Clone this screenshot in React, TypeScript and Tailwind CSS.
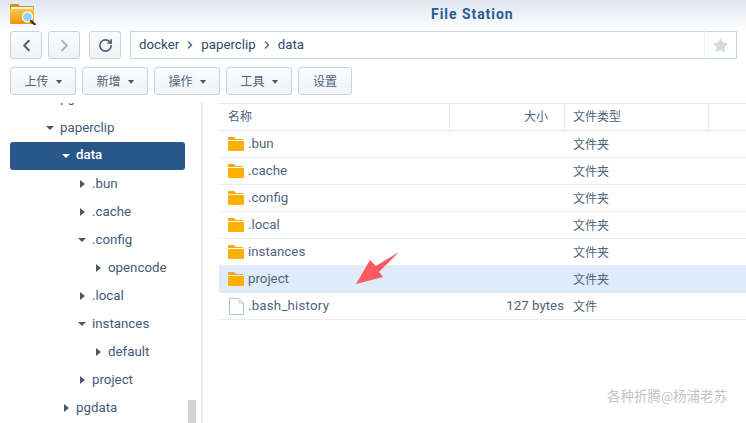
import { ChevronLeft, ChevronRight, RotateCw, Star } from 'lucide-react'

const FONT = "font-['Roboto','Noto_Sans_CJK_SC',sans-serif]"

const treeRows = [
  { label: 'pgadmin', depth: 2 },
  { label: 'paperclip', depth: 2, open: true },
  { label: 'data', depth: 3, open: true, selected: true },
  { label: '.bun', depth: 4 },
  { label: '.cache', depth: 4 },
  { label: '.config', depth: 4, open: true },
  { label: 'opencode', depth: 5 },
  { label: '.local', depth: 4 },
  { label: 'instances', depth: 4, open: true },
  { label: 'default', depth: 5 },
  { label: 'project', depth: 4 },
  { label: 'pgdata', depth: 3 },
]

const depthPad: Record<number, string> = {
  2: 'pl-[36px]',
  3: 'pl-[52px]',
  4: 'pl-[68px]',
  5: 'pl-[84px]',
}

const files = [
  { name: '.bun', type: '文件夹' },
  { name: '.cache', type: '文件夹' },
  { name: '.config', type: '文件夹' },
  { name: '.local', type: '文件夹' },
  { name: 'instances', type: '文件夹' },
  { name: 'project', type: '文件夹', hover: true },
  { name: '.bash_history', type: '文件', size: '127 bytes', file: true },
]

function FolderIcon() {
  return (
    <svg width="16" height="14" viewBox="0 0 16 14" className="shrink-0">
      <path d="M0 1 Q0 0 1 0 H6 L8 2 H15 V3 H0 Z" fill="#f5a81c" />
      <path d="M0 4 H16 V13 Q16 14 15 14 H1 Q0 14 0 13 Z" fill="#ffb000" />
    </svg>
  )
}

function FileIcon() {
  return (
    <svg width="15" height="17" viewBox="0 0 15 17" className="shrink-0">
      <path d="M.5.5 H10 L14.5 5 V16.5 H.5 Z" fill="#fff" stroke="#b4c0c8" />
      <path d="M10 .5 V5 H14.5" fill="#eef1f4" stroke="#c8d0d6" />
    </svg>
  )
}

function AppIcon() {
  return (
    <svg width="26" height="21" viewBox="0 0 26 21" className="shrink-0">
      <defs>
        <linearGradient id="fold" x1="0" y1="0" x2="0" y2="1">
          <stop offset="0" stopColor="#fcc64a" />
          <stop offset="1" stopColor="#ec9410" />
        </linearGradient>
      </defs>
      <path d="M0 1 Q0 0 1 0 H8 L10 2 H23 Q24 2 24 3 V6 H0 Z" fill="#d98f1c" />
      <rect x="1" y="3" width="22" height="2" fill="#f5efe0" />
      <path d="M0 5 H24 V19 Q24 20 23 20 H1 Q0 20 0 19 Z" fill="url(#fold)" />
      <circle cx="17.5" cy="13" r="5" fill="#8fd3f4" stroke="#f5f5f5" strokeWidth="1.4" />
      <path d="M21 17 L25 20.5" stroke="#333" strokeWidth="2.2" strokeLinecap="round" />
    </svg>
  )
}

function Caret() {
  return <span className="ml-[7px] h-0 w-0 border-x-[3.5px] border-t-[4px] border-x-transparent border-t-[#4a5a6a]" />
}

function ToolButton({ label, width, caret = true }: { label: string; width: string; caret?: boolean }) {
  return (
    <button className={`flex h-7 items-center justify-center rounded-[3px] border border-[#c8d4e0] bg-gradient-to-b from-[#fafbfd] to-[#eff3f7] pt-px text-[12px] text-[#50647a] ${width}`}>
      {label}
      {caret && <Caret />}
    </button>
  )
}

function NavButton({ children }: { children: React.ReactNode }) {
  return (
    <button className="flex h-7 w-8 items-center justify-center rounded-[3px] border border-[#c8d4e0] bg-gradient-to-b from-[#fafbfd] to-[#eff3f7]">
      {children}
    </button>
  )
}

function Separator() {
  return <ChevronRight size={12} strokeWidth={3.2} className="mx-[5px] text-[#5a6a7a]" />
}

export default function App() {
  return (
    <div className={`relative flex h-[423px] w-[746px] flex-col overflow-hidden bg-white ${FONT}`}>
      {/* header */}
      <div className="flex h-[31px] shrink-0 items-start bg-gradient-to-b from-[#e0e7ef] to-[#ffffff] pl-[10px] pt-[4px]">
        <AppIcon />
        <div className="ml-[395px] text-[14px] font-bold leading-[21px] tracking-[0.95px] text-[#2b5b90]">
          File Station
        </div>
      </div>

      {/* nav row */}
      <div className="flex h-7 shrink-0 items-center pl-[10px] pr-[9px]">
        <NavButton>
          <ChevronLeft size={19} strokeWidth={2.4} className="text-[#4e5e6e]" />
        </NavButton>
        <div className="ml-[6px]">
          <NavButton>
            <ChevronRight size={19} strokeWidth={2.4} className="text-[#a8b4c0]" />
          </NavButton>
        </div>
        <div className="ml-[9px]">
          <NavButton>
            <RotateCw size={15} strokeWidth={2.6} className="text-[#4e5e6e]" />
          </NavButton>
        </div>
        <div className="ml-[9px] flex h-7 flex-1 items-center border border-[#c8d4e0] pl-2 text-[13.3px] text-[#2f4a68]">
          docker
          <Separator />
          paperclip
          <Separator />
          data
          <div className="-my-px ml-auto flex h-7 w-[32px] items-center justify-center border-l border-[#eef2f6]">
            <Star size={15} className="fill-[#d3dae3] text-[#d3dae3]" />
          </div>
        </div>
      </div>

      {/* action row */}
      <div className="mt-2 flex h-7 shrink-0 gap-[6px] pl-[10px]">
        <ToolButton label="上传" width="w-[66px]" />
        <ToolButton label="新增" width="w-[66px]" />
        <ToolButton label="操作" width="w-[66px]" />
        <ToolButton label="工具" width="w-[66px]" />
        <ToolButton label="设置" width="w-[54px]" caret={false} />
      </div>

      {/* body */}
      <div className="mt-2 flex min-h-0 flex-1">
        {/* tree */}
        <div className="relative w-[203px] shrink-0 overflow-hidden border-r-2 border-[#e8ecf0] pl-[10px]">
          <div className="mt-[-17px] w-[175px]">
            {treeRows.map((row) => (
              <div
                key={row.label}
                className={`flex h-7 items-center text-[13.3px] ${depthPad[row.depth]} ${row.label === 'pgadmin' ? 'pb-[4px]' : ''} ${row.selected ? 'rounded-[3px] bg-[#2a5789] font-medium text-white' : 'text-[#3f5b78]'}`}
              >
                <span className="flex w-[14px] shrink-0 items-center">
                  {row.label === 'pgadmin' ? null : row.open ? (
                    <span className={`h-0 w-0 border-x-[4px] border-t-[4px] border-x-transparent ${row.selected ? 'border-t-white' : 'border-t-[#4a5a6a]'}`} />
                  ) : (
                    <span className="ml-[2px] h-0 w-0 border-y-[4px] border-l-[5px] border-y-transparent border-l-[#4a5a6a]" />
                  )}
                </span>
                <span className={row.selected ? '-mt-[2px]' : '-mt-px'}>{row.label}</span>
              </div>
            ))}
          </div>
          <div className="absolute bottom-0 left-[188px] h-[23px] w-2 bg-[#d2d2d2]" />
        </div>

        {/* list */}
        <div className="ml-[16px] min-w-0 flex-1">
          <div className="flex h-[28px] border-y border-[#e3e9f0] text-[12px] text-[#50647a]">
            <div className="flex w-[231px] items-center border-r border-[#e3e9f0] pl-[9px]">名称</div>
            <div className="flex w-[115px] items-center justify-end border-r border-[#e3e9f0] pr-4">大小</div>
            <div className="flex w-[144px] items-center border-r border-[#e3e9f0] pl-2">文件类型</div>
          </div>
          {files.map((f) => (
            <div
              key={f.name}
              className={`flex h-[27px] items-center border-b text-[13.3px] text-[#50647a] ${f.hover ? 'border-[#dfeafa] bg-[#deebfa]' : 'border-[#e8edf2]'}`}
            >
              <div className="flex w-[231px] items-center gap-[4px] pl-[9px]">
                {f.file ? (
                  <span className="ml-px">
                    <FileIcon />
                  </span>
                ) : (
                  <FolderIcon />
                )}
                <span className={f.file ? 'tracking-[0.2px]' : ''}>{f.name}</span>
              </div>
              <div className="w-[115px] pr-[1px] text-right">{f.size}</div>
              <div className="pl-2 pt-px text-[12px]">{f.type}</div>
            </div>
          ))}
        </div>
      </div>

      {/* annotation arrow */}
      <svg width="50" height="38" viewBox="0 0 50 38" className="absolute left-[353px] top-[250px]">
        <path d="M3 34 L17 10 L23 16 L46 2 L26 22 L30 27 Z" fill="#fc5a60" />
      </svg>

      {/* watermark */}
      <div className="absolute left-[607px] top-[386px] text-[13.5px] leading-5 text-[#c4c4c4]">各种折腾@杨浦老苏</div>
    </div>
  )
}
